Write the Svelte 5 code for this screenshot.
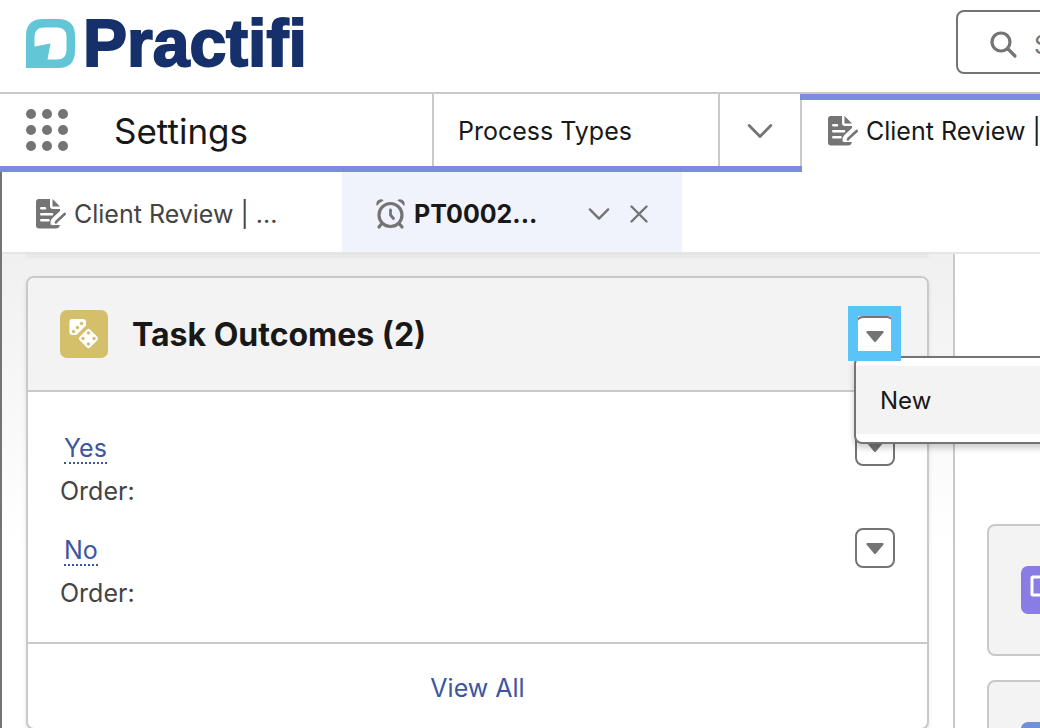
<script lang="ts">
	type Outcome = { name: string; order: string };

	const appName = 'Settings';
	const outcomes: Outcome[] = [
		{ name: 'Yes', order: '' },
		{ name: 'No', order: '' }
	];

	let menuOpen = $state(true);
</script>

{#snippet recordIcon()}
	<svg class="icon" viewBox="0 0 30 30" aria-hidden="true">
		<path d="M3 0H14V7Q14 10 17 10H24V12L16 19.500Q14 21.500 14.500 25.500Q17 26.500 19 26H24Q23 29.500 20 29.500H3Q0 29.500 0 26.500V3Q0 0 3 0Z" fill="#747474" />
		<path d="M16.500 0L24 7.500H16.500Z" fill="#747474" />
		<path d="M5.300 9.300H9M5.300 15.300H16M5.300 21.300H12.500" stroke="#fff" stroke-width="2.600" stroke-linecap="round" />
		<path d="M28.500 15.500L20 23.500" stroke="#fff" stroke-width="6" />
		<path d="M28.700 15L20.500 22.500L20 23.500" stroke="#747474" stroke-width="2.600" stroke-linecap="round" />
	</svg>
{/snippet}

{#snippet chevron(size: number)}
	<svg width={size} height={size} viewBox="0 0 24 24" fill="none" stroke="#747474" stroke-width="2.600" stroke-linecap="round" stroke-linejoin="round" aria-hidden="true">
		<path d="M2 7L12 17L22 7" />
	</svg>
{/snippet}

{#snippet arrowDown()}
	<svg width="18" height="12" viewBox="0 0 18 12" aria-hidden="true">
		<path d="M1 0H17Q18 0.500 17.500 1.500L10 10.500Q9 11.500 8 10.500L0.500 1.500Q0 0.500 1 0Z" fill="#747474" />
	</svg>
{/snippet}

<div class="app">
	<header class="top">
		<a class="logo" href="#home">
			<svg width="49" height="49" viewBox="0 0 49 49" aria-hidden="true">
				<path fill="#62c6d7" fill-rule="evenodd" d="M17 0H32Q49 0 49 17V32Q49 49 32 49H0V17Q0 0 17 0ZM18 8.500Q8.500 8.500 8.500 18V27.500L24.500 24.500L21.500 40.500H31Q40.500 40.500 40.500 31V18Q40.500 8.500 31 8.500Z" />
			</svg>
			<span>Practifi</span>
		</a>
		<div class="search-area">
			<label class="search">
				<svg width="28" height="28" viewBox="0 0 28 28" fill="none" stroke="#747474" stroke-width="3.200" stroke-linecap="round" aria-hidden="true">
					<circle cx="11" cy="11" r="9" />
					<path d="M18 18L25 25" />
				</svg>
				<input type="text" placeholder="Search..." aria-label="Search" />
			</label>
		</div>
	</header>

	<nav class="nav">
		<div class="nav-main">
			<button class="launcher" aria-label="App Launcher">
				{#each Array(9) as _}
					<span class="dot"></span>
				{/each}
			</button>
			<span class="app-name">{appName}</span>
			<a class="nav-item" href="#process-types">Process Types</a>
			<button class="nav-more" aria-label="Show navigation menu">{@render chevron(26)}</button>
		</div>
		<a class="nav-active" href="#client-review">
			{@render recordIcon()}
			Client Review |
		</a>
	</nav>

	<div class="workspace">
		<div class="subtabs">
			<div class="subtab">
				{@render recordIcon()}
				<a href="#client-review">Client Review | ...</a>
			</div>
			<div class="subtab selected">
				<svg class="icon" viewBox="0 0 30 30" fill="none" stroke="#747474" aria-hidden="true">
					<circle cx="14.500" cy="16" r="11.500" stroke-width="3.200" />
					<path d="M14.500 11V16L17.500 19.500" stroke-width="2.800" stroke-linecap="round" stroke-linejoin="round" />
					<path d="M5 25.500L3 28M24 25.500L26 28" stroke-width="3.200" stroke-linecap="round" />
					<path d="M0.500 6.500Q-0.500 1 5 0.300Q7 0.300 7.500 1.500Q3.500 3.500 1.500 6.500ZM28.500 6.500Q29.500 1 24 0.300Q22 0.300 21.500 1.500Q25.500 3.500 27.500 6.500Z" fill="#747474" stroke="none" />
				</svg>
				<a href="#pt0002">PT0002...</a>
				<button class="tab-menu" aria-label="Tab actions">{@render chevron(22)}</button>
				<button class="tab-close" aria-label="Close tab">
					<svg width="18" height="18" viewBox="0 0 18 18" stroke="#747474" stroke-width="2.400" stroke-linecap="round" aria-hidden="true">
						<path d="M1.500 1.500L16.500 16.500M16.500 1.500L1.500 16.500" />
					</svg>
				</button>
			</div>
		</div>

		<div class="columns">
			<main class="left">
				<div class="card-end"></div>
				<article class="card">
					<header class="card-header">
						<svg width="48" height="48" viewBox="0 0 48 48" aria-hidden="true">
							<rect width="48" height="48" rx="7" fill="#d4c06b" />
							<path fill="#fff" d="M12 9H23Q26 9 26 12V15.500L16.500 25H12Q9.500 25 9.500 22V12Q9.500 9 12 9Z" />
							<rect x="21" y="21" width="15" height="15" rx="2.500" transform="rotate(45 28.500 28.500)" fill="#fff" />
							<g fill="#d4c06b">
								<circle cx="21.500" cy="13.500" r="1.700" />
								<circle cx="17.500" cy="17.500" r="1.700" />
								<circle cx="13.500" cy="21.500" r="1.700" />
								<circle cx="28.500" cy="23" r="1.700" />
								<circle cx="23" cy="28.500" r="1.700" />
								<circle cx="34" cy="28.500" r="1.700" />
								<circle cx="28.500" cy="34" r="1.700" />
							</g>
						</svg>
						<h2>Task Outcomes (2)</h2>
						<div class="menu-anchor">
							<button class="arrow-button" aria-label="Show actions" aria-expanded={menuOpen} onclick={() => (menuOpen = !menuOpen)}>
								{@render arrowDown()}
							</button>
							{#if menuOpen}
								<div class="menu">
									<button class="menu-item">New</button>
								</div>
							{/if}
							<span class="highlight"></span>
						</div>
					</header>
					<ul>
						{#each outcomes as outcome}
							<li>
								<div>
									<a class="name" href="#outcome">{outcome.name}</a>
									<p>Order: {outcome.order}</p>
								</div>
								<button class="arrow-button" aria-label="Actions for {outcome.name}">
									{@render arrowDown()}
								</button>
							</li>
						{/each}
					</ul>
					<footer>
						<a href="#all">View All</a>
					</footer>
				</article>
			</main>

			<aside class="right">
				<section class="side-card">
					<svg width="48" height="48" viewBox="0 0 48 48" aria-hidden="true">
						<rect width="48" height="48" rx="7" fill="#897de4" />
						<rect x="11" y="11" width="26" height="18" rx="1" fill="none" stroke="#fff" stroke-width="3" />
						<path d="M22 35H30" stroke="#fff" stroke-width="3" stroke-linecap="round" />
					</svg>
				</section>
				<section class="side-card">
					<svg width="48" height="48" viewBox="0 0 48 48" aria-hidden="true">
						<rect width="48" height="48" rx="7" fill="#6f91d7" />
					</svg>
				</section>
			</aside>
		</div>
	</div>
</div>

<style>
	:global(body) {
		margin: 0;
	}

	.app {
		display: flex;
		flex-direction: column;
		height: 100vh;
		overflow: hidden;
		background: #fff;
		color: #181818;
		font-family: Inter, 'Liberation Sans', sans-serif;
		font-size: 25px;
		line-height: 36px;
	}

	button {
		display: flex;
		align-items: center;
		justify-content: center;
		padding: 0;
		border: 0;
		background: none;
		color: inherit;
		font: inherit;
	}

	a {
		color: inherit;
		text-decoration: none;
	}

	svg {
		display: block;
		flex-shrink: 0;
	}

	.icon {
		width: 30px;
		height: 30px;
	}

	.top {
		display: flex;
		justify-content: space-between;
		height: 92px;
		flex-shrink: 0;
		border-bottom: 2px solid #c9c9c9;
	}

	.logo {
		display: flex;
		align-items: center;
		gap: 8px;
		padding: 0 26px 6px;
		color: #16306b;
		font-family: 'Liberation Sans', Arial, sans-serif;
		font-size: 66px;
		font-weight: 700;
		line-height: 72px;
		font-variant-ligatures: none;
		-webkit-text-stroke: 2px #16306b;
	}

	.search-area {
		flex: 0 0 84px;
		min-width: 0;
		padding-top: 10px;
	}

	.search {
		display: flex;
		align-items: center;
		gap: 16px;
		box-sizing: border-box;
		width: 440px;
		height: 64px;
		padding: 6px 32px 0;
		border: 2px solid #747474;
		border-radius: 8px;
	}

	.search input {
		flex: 1;
		border: 0;
		outline: 0;
		padding: 0;
		font: inherit;
	}

	.search input::placeholder {
		color: #747474;
	}

	.nav {
		display: flex;
		height: 78px;
		flex-shrink: 0;
		white-space: nowrap;
	}

	.nav-main {
		display: flex;
		align-items: stretch;
		border-bottom: 6px solid #7b8cde;
	}

	.launcher {
		display: grid;
		grid-template-columns: repeat(3, 10px);
		align-content: center;
		justify-content: start;
		gap: 6px;
		padding-left: 26px;
	}

	.dot {
		width: 10px;
		height: 10px;
		border-radius: 50%;
		background: #747474;
	}

	.app-name {
		display: flex;
		align-items: center;
		width: 318px;
		margin-left: 46px;
		font-size: 35px;
		padding-top: 2px;
	}

	.nav-item,
	.nav-more {
		display: flex;
		align-items: center;
		padding-top: 2px;
		border-left: 2px solid #c9c9c9;
	}

	.nav-item {
		width: 260px;
		padding-left: 24px;
	}

	.nav-more {
		width: 84px;
		border-right: 2px solid #c9c9c9;
	}

	.nav-active {
		display: flex;
		flex: 1 0 auto;
		align-items: center;
		gap: 8px;
		box-sizing: border-box;
		height: 72px;
		margin-left: -2px;
		padding: 0 0 4px 28px;
		border-top: 6px solid #7b8cde;
	}

	.workspace {
		display: flex;
		flex: 1;
		flex-direction: column;
		min-height: 0;
		border-left: 2px solid #747474;
	}

	.subtabs {
		display: flex;
		flex-shrink: 0;
		height: 80px;
		border-bottom: 2px solid #e5e5e5;
	}

	.subtab {
		display: flex;
		align-items: center;
		gap: 8px;
		box-sizing: border-box;
		width: 340px;
		padding: 4px 34px 0;
		color: #444;
		white-space: nowrap;
	}

	.selected {
		background: #f1f3fc;
		color: #181818;
		font-weight: 700;
	}

	.tab-menu {
		margin-left: auto;
	}

	.tab-close {
		margin-left: 12px;
	}

	.columns {
		display: grid;
		grid-template-columns: minmax(0, 1fr) 85px;
		flex: 1;
		min-height: 0;
	}

	.left {
		padding: 0 24px;
		border-right: 2px solid #c9c9c9;
		background: linear-gradient(#f0f0f0, #fff 290px);
	}

	.card-end {
		height: 1px;
		margin-bottom: 21px;
		border-radius: 0 0 8px 8px;
		background: #e5e5e5;
		box-shadow: 0 2px 3px rgba(0, 0, 0, 0.12);
	}

	.card {
		border: 2px solid #c9c9c9;
		border-radius: 8px;
		background: #fff;
		box-shadow: 0 2px 4px rgba(0, 0, 0, 0.1);
	}

	.card-header {
		display: flex;
		align-items: center;
		gap: 24px;
		height: 112px;
		padding: 0 32px;
		border-bottom: 2px solid #c9c9c9;
		border-radius: 6px 6px 0 0;
		background: #f3f3f3;
	}

	h2 {
		margin: 0;
		padding-top: 2px;
		font-size: 32px;
		font-weight: 700;
	}

	.menu-anchor {
		position: relative;
		margin-left: auto;
		padding-top: 4px;
	}

	.arrow-button {
		box-sizing: border-box;
		width: 40px;
		height: 40px;
		padding-top: 2px;
		border: 2px solid #747474;
		border-radius: 8px;
		background: #fff;
	}

	.menu {
		position: absolute;
		z-index: 1;
		top: 44px;
		left: -1px;
		width: 320px;
		padding: 8px 0;
		border: 2px solid #747474;
		border-radius: 8px;
		background: #fff;
		box-shadow: 0 4px 6px rgba(0, 0, 0, 0.2);
	}

	.menu-item {
		justify-content: flex-start;
		width: 100%;
		height: 68px;
		padding: 2px 24px 0;
		background: #f3f3f3;
		font-size: 24px;
	}

	.highlight {
		position: absolute;
		z-index: 2;
		inset: -6px -6px -5px -7px;
		border: 10px solid #5ac4f8;
		pointer-events: none;
	}

	ul {
		margin: 0;
		padding: 34px 32px 28px;
		list-style: none;
	}

	li {
		display: flex;
		justify-content: space-between;
		height: 94px;
		padding-bottom: 8px;
	}

	li:last-child {
		height: 86px;
		padding-bottom: 0;
	}

	.name {
		display: inline-block;
		margin: 8px 4px 0;
		border-bottom: 2px dotted #3c56a0;
		color: #3c56a0;
		line-height: 28px;
	}

	p {
		margin: 7px 0 0;
		color: #444;
	}

	footer {
		padding: 26px 26px 22px;
		border-top: 2px solid #c9c9c9;
		color: #3c56a0;
		text-align: center;
	}

	.right {
		display: flex;
		flex-direction: column;
		gap: 24px;
		padding: 270px 0 0 32px;
		overflow: hidden;
	}

	.side-card {
		flex-shrink: 0;
		box-sizing: border-box;
		width: 400px;
		height: 132px;
		padding: 40px 32px;
		border: 2px solid #c9c9c9;
		border-radius: 8px;
		background: #f3f3f3;
	}
</style>
